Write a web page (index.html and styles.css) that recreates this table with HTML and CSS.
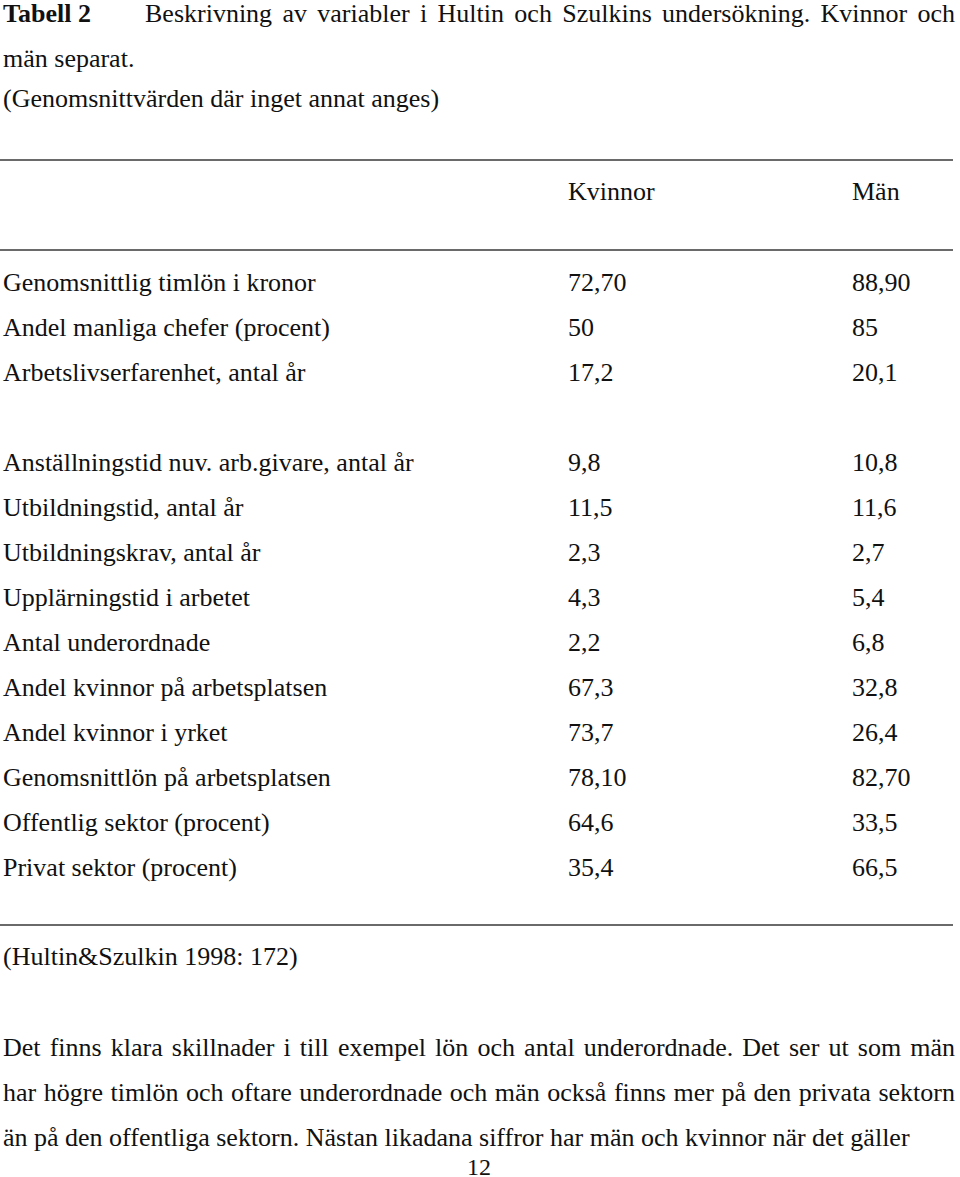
FILE: index.html
```html
<!DOCTYPE html>
<html lang="sv">
<head>
<meta charset="utf-8">
<title>Tabell 2</title>
<link rel="stylesheet" href="styles.css">
</head>
<body>
<main class="page">
  <p class="caption"><span class="caption-label">Tabell 2</span><span class="caption-text">Beskrivning av variabler i Hultin och Szulkins undersökning. Kvinnor och män separat.</span></p>
  <p class="caption-note">(Genomsnittvärden där inget annat anges)</p>

  <section class="table">
    <hr class="rule rule-top">
    <div class="row head">
      <span></span><span>Kvinnor</span><span>Män</span>
    </div>
    <hr class="rule rule-mid">
    <div class="body">
      <div class="row"><span>Genomsnittlig timlön i kronor</span><span>72,70</span><span>88,90</span></div>
      <div class="row"><span>Andel manliga chefer (procent)</span><span>50</span><span>85</span></div>
      <div class="row"><span>Arbetslivserfarenhet, antal år</span><span>17,2</span><span>20,1</span></div>
      <div class="row empty"><span></span><span></span><span></span></div>
      <div class="row"><span>Anställningstid nuv. arb.givare, antal år</span><span>9,8</span><span>10,8</span></div>
      <div class="row"><span>Utbildningstid, antal år</span><span>11,5</span><span>11,6</span></div>
      <div class="row"><span>Utbildningskrav, antal år</span><span>2,3</span><span>2,7</span></div>
      <div class="row"><span>Upplärningstid i arbetet</span><span>4,3</span><span>5,4</span></div>
      <div class="row"><span>Antal underordnade</span><span>2,2</span><span>6,8</span></div>
      <div class="row"><span>Andel kvinnor på arbetsplatsen</span><span>67,3</span><span>32,8</span></div>
      <div class="row"><span>Andel kvinnor i yrket</span><span>73,7</span><span>26,4</span></div>
      <div class="row"><span>Genomsnittlön på arbetsplatsen</span><span>78,10</span><span>82,70</span></div>
      <div class="row"><span>Offentlig sektor (procent)</span><span>64,6</span><span>33,5</span></div>
      <div class="row"><span>Privat sektor (procent)</span><span>35,4</span><span>66,5</span></div>
    </div>
    <hr class="rule rule-bottom">
  </section>

  <p class="source">(Hultin&amp;Szulkin 1998: 172)</p>

  <p class="text">Det finns klara skillnader i till exempel lön och antal underordnade. Det ser ut som män har högre timlön och oftare underordnade och män också finns mer på den privata sektorn än på den offentliga sektorn. Nästan likadana siffror har män och kvinnor när det gäller</p>

  <footer class="page-number">12</footer>
</main>
</body>
</html>
```

FILE: styles.css
```css
html, body {
  margin: 0;
  padding: 0;
  background: #ffffff;
}

body {
  width: 960px;
  height: 1177px;
  overflow: hidden;
  color: #111111;
  font-family: "Liberation Serif", "Times New Roman", serif;
  font-size: 26px;
}

.page {
  width: 952px;
  padding-left: 3px;
}

p {
  margin: 0;
}

.caption {
  margin-top: -9px;
  line-height: 45px;
  text-align: justify;
  text-align-last: left;
}

.caption-label {
  display: inline-block;
  width: 142px;
  font-weight: bold;
}

.caption-note {
  margin-top: 3px;
  line-height: 30px;
}

.table {
  margin-top: 45px;
}

.rule {
  margin: 0 0 0 -3px;
  width: 953px;
  height: 0;
  border: 0;
  border-top: 2px solid #6a6a6a;
}

.row {
  display: grid;
  grid-template-columns: 565px 284px 1fr;
  height: 45px;
  line-height: 45px;
  white-space: nowrap;
}

.head {
  margin-top: 8px;
  margin-bottom: 35px;
}

.body {
  padding-top: 9px;
  padding-bottom: 34px;
}

.source {
  margin-top: 8px;
  line-height: 45px;
}

.text {
  margin-top: 46px;
  line-height: 45px;
  text-align: justify;
}

.page-number {
  text-align: center;
  font-size: 24px;
  line-height: 18px;
  margin-top: -2px;
}
```
